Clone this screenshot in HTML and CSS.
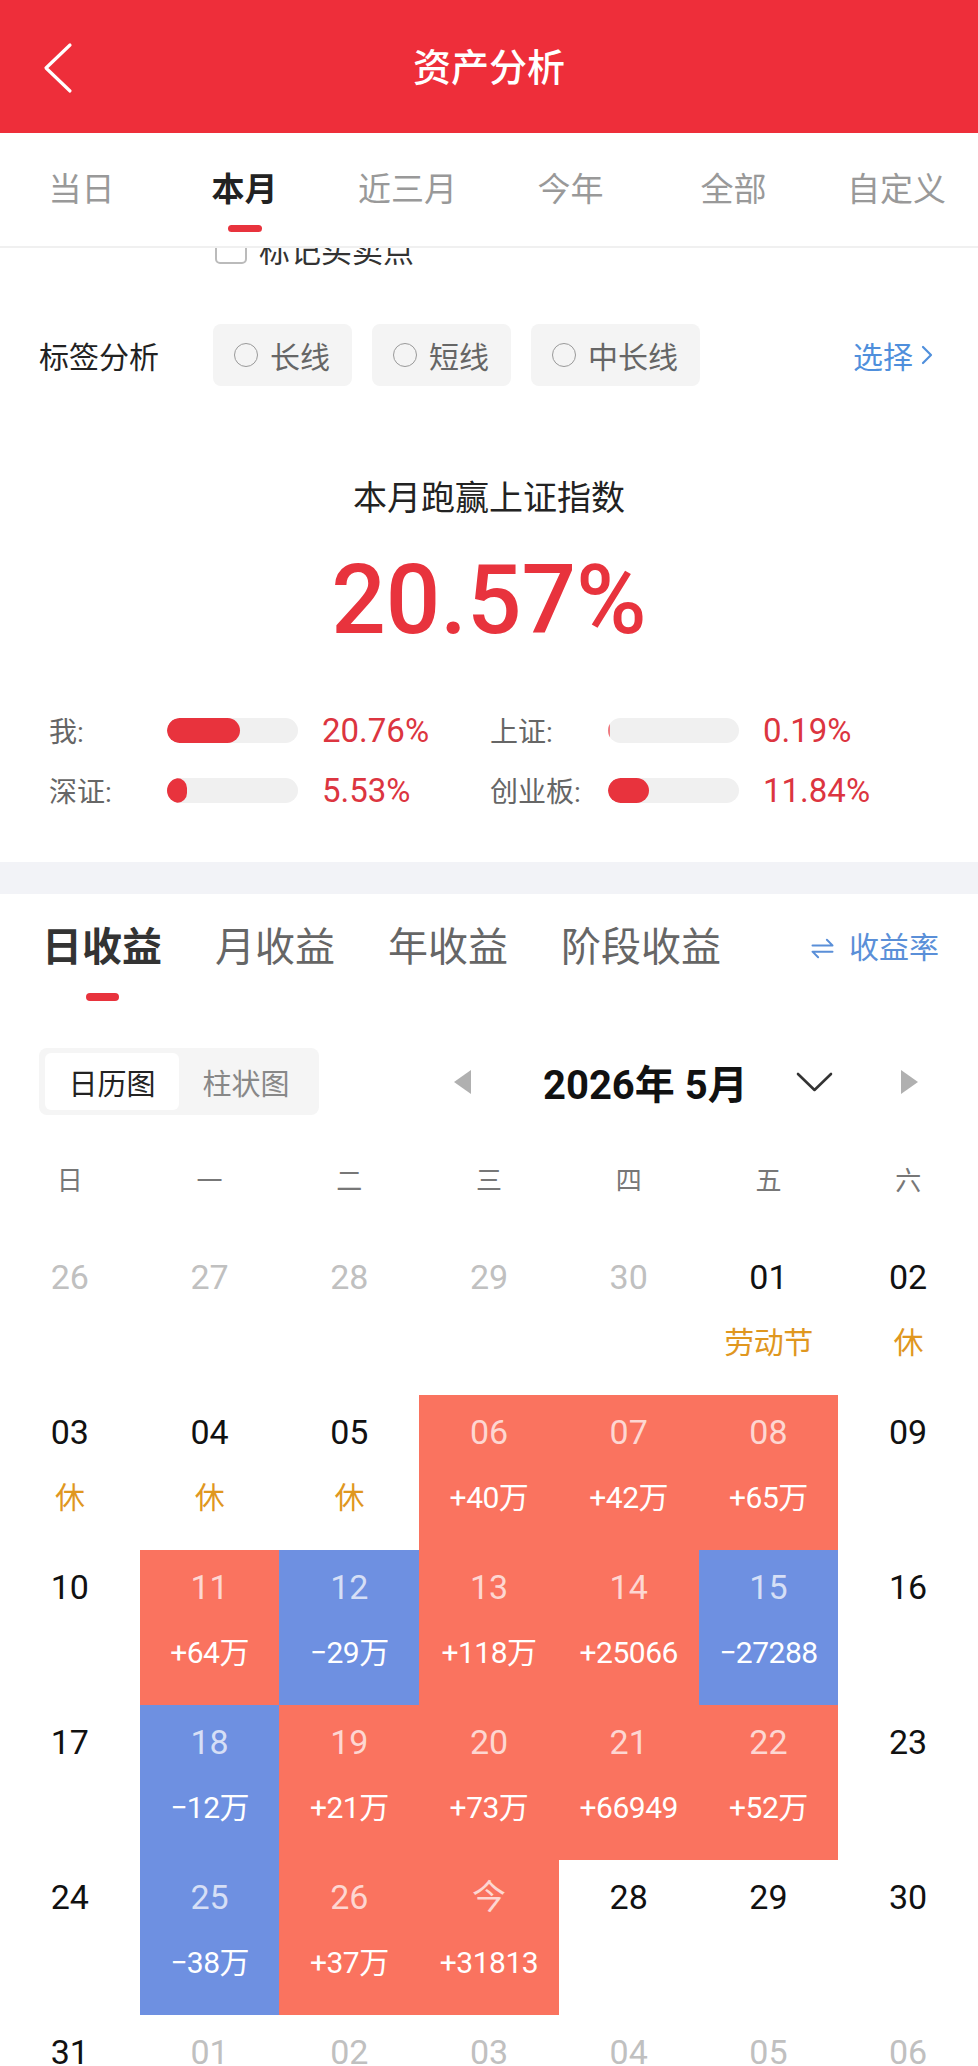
FILE: index.html
```html
<!DOCTYPE html>
<html lang="zh-CN">
    <head>
        <title>资产分析</title>
        <meta charset="utf-8" />
        <meta name="viewport" content="width=device-width, initial-scale=1.0" />
        <link rel="stylesheet" href="styles.css">
    </head>
    <body>
        <div class="topbar">
            <a class="back" href="#">
                <svg width="30" height="52" viewBox="0 0 30 52"><polyline points="27,3 3,26 27,49" fill="none" stroke="#fff" stroke-width="3.2" stroke-linecap="round" stroke-linejoin="round" /></svg>
            </a>
            <h1>资产分析</h1>
            <span></span>
        </div>
        <div class="periods">
            <a href="#">当日</a>
            <a class="on" href="#">本月</a>
            <a href="#">近三月</a>
            <a href="#">今年</a>
            <a href="#">全部</a>
            <a href="#">自定义</a>
        </div>
        <div class="marks-clip">
            <label class="marks"><span class="box"></span>标记买卖点</label>
        </div>
        <div class="tags">
            <span class="tags-title">标签分析</span>
            <span class="chip"><i class="radio"></i>长线</span>
            <span class="chip"><i class="radio"></i>短线</span>
            <span class="chip"><i class="radio"></i>中长线</span>
            <a class="pick" href="#">选择<svg width="12" height="20" viewBox="0 0 12 20"><polyline points="2,2 10,10 2,18" fill="none" stroke="#4f8fdc" stroke-width="2.2" stroke-linecap="round" stroke-linejoin="round" /></svg></a>
        </div>
        <div class="beat">
            <p class="beat-title">本月跑赢上证指数</p>
            <p class="beat-num">20.57%</p>
            <div class="compare">
                <div class="item">
                    <span class="name">我:</span>
                    <span class="bar"><i style="width: 73px"></i></span>
                    <span class="val">20.76%</span>
                </div>
                <div class="item">
                    <span class="name">上证:</span>
                    <span class="bar"><i class="thin" style="width: 2px"></i></span>
                    <span class="val">0.19%</span>
                </div>
                <div class="item">
                    <span class="name">深证:</span>
                    <span class="bar"><i style="width: 20px"></i></span>
                    <span class="val">5.53%</span>
                </div>
                <div class="item">
                    <span class="name">创业板:</span>
                    <span class="bar"><i style="width: 41px"></i></span>
                    <span class="val">11.84%</span>
                </div>
            </div>
        </div>
        <div class="band"></div>
        <div class="profit-tabs">
            <a class="on" href="#">日收益</a>
            <a href="#">月收益</a>
            <a href="#">年收益</a>
            <a href="#">阶段收益</a>
            <a class="rate" href="#"><svg width="25" height="25" viewBox="0 0 20 20"><path d="M2 7.5H18L13.5 3M18 12.5H2L6.5 17" fill="none" stroke="#5a8fd8" stroke-width="1.6" stroke-linecap="round" stroke-linejoin="round" /></svg>收益率</a>
        </div>
        <div class="cal-bar">
            <div class="toggle">
                <span class="on">日历图</span>
                <span>柱状图</span>
            </div>
            <div class="month-nav">
                <svg class="tri" width="17" height="24" viewBox="0 0 17 24"><polygon points="17,0 17,24 0,12" fill="#b0b0b0" /></svg>
                <span class="month">2026年 5月</span>
                <svg class="drop" width="37" height="20" viewBox="0 0 37 20"><polyline points="2,2 18.5,18 35,2" fill="none" stroke="#333" stroke-width="2.6" stroke-linecap="round" stroke-linejoin="round" /></svg>
                <svg class="tri next" width="17" height="24" viewBox="0 0 17 24"><polygon points="0,0 0,24 17,12" fill="#b0b0b0" /></svg>
            </div>
        </div>
        <div class="week">
            <span>日</span><span>一</span><span>二</span><span>三</span><span>四</span><span>五</span><span>六</span>
        </div>
        <div class="days">
            <div class="day other"><b>26</b></div>
            <div class="day other"><b>27</b></div>
            <div class="day other"><b>28</b></div>
            <div class="day other"><b>29</b></div>
            <div class="day other"><b>30</b></div>
            <div class="day"><b>01</b><em class="rest">劳动节</em></div>
            <div class="day"><b>02</b><em class="rest">休</em></div>

            <div class="day"><b>03</b><em class="rest">休</em></div>
            <div class="day"><b>04</b><em class="rest">休</em></div>
            <div class="day"><b>05</b><em class="rest">休</em></div>
            <div class="day up"><b>06</b><em>+40万</em></div>
            <div class="day up"><b>07</b><em>+42万</em></div>
            <div class="day up"><b>08</b><em>+65万</em></div>
            <div class="day"><b>09</b></div>

            <div class="day"><b>10</b></div>
            <div class="day up"><b>11</b><em>+64万</em></div>
            <div class="day down"><b>12</b><em>−29万</em></div>
            <div class="day up"><b>13</b><em>+118万</em></div>
            <div class="day up"><b>14</b><em>+25066</em></div>
            <div class="day down"><b>15</b><em>−27288</em></div>
            <div class="day"><b>16</b></div>

            <div class="day"><b>17</b></div>
            <div class="day down"><b>18</b><em>−12万</em></div>
            <div class="day up"><b>19</b><em>+21万</em></div>
            <div class="day up"><b>20</b><em>+73万</em></div>
            <div class="day up"><b>21</b><em>+66949</em></div>
            <div class="day up"><b>22</b><em>+52万</em></div>
            <div class="day"><b>23</b></div>

            <div class="day"><b>24</b></div>
            <div class="day down"><b>25</b><em>−38万</em></div>
            <div class="day up"><b>26</b><em>+37万</em></div>
            <div class="day up"><b>今</b><em>+31813</em></div>
            <div class="day"><b>28</b></div>
            <div class="day"><b>29</b></div>
            <div class="day"><b>30</b></div>

            <div class="day"><b>31</b></div>
            <div class="day other"><b>01</b></div>
            <div class="day other"><b>02</b></div>
            <div class="day other"><b>03</b></div>
            <div class="day other"><b>04</b></div>
            <div class="day other"><b>05</b></div>
            <div class="day other"><b>06</b></div>
        </div>
    </body>
</html>
```

FILE: styles.css
```css
html, body {
    margin: 0px;
    padding: 0px;
    background: white;
    font-family: Roboto, "Noto Sans CJK SC", sans-serif;
    color: #222;
}
a {
    text-decoration: none;
}
p {
    margin: 0px;
}
.topbar {
    display: grid;
    grid-template-columns: 1fr auto 1fr;
    align-items: center;
    height: 133px;
    padding-top: 2px;
    box-sizing: border-box;
    background: #ee2e3a;
}
.back {
    display: flex;
    padding-left: 43px;
}
.topbar h1 {
    margin: 0px;
    color: white;
    font-size: 38px;
    font-weight: 500;
    line-height: 50px;
}
.periods {
    display: grid;
    grid-template-columns: repeat(6, minmax(0, 1fr));
    height: 115px;
    box-sizing: border-box;
    border-bottom: 2px solid #f0f0f0;
}
.periods a {
    display: flex;
    flex-direction: column;
    align-items: center;
    padding-top: 37px;
    color: #999;
    font-size: 33px;
    line-height: 40px;
}
.periods a.on {
    color: #222;
    font-weight: bold;
}
.periods a.on::after {
    content: "";
    margin-top: 15px;
    width: 34px;
    height: 7px;
    border-radius: 4px;
    background: #e8333d;
}
.marks-clip {
    height: 20px;
    overflow: hidden;
}
.marks {
    display: flex;
    align-items: center;
    margin-top: -16px;
    padding-left: 215px;
    height: 32px;
    font-size: 31px;
    color: #333;
}
.marks .box {
    flex: none;
    width: 28px;
    height: 28px;
    margin-right: 12px;
    border: 2px solid #bbb;
    border-radius: 5px;
}
.tags {
    display: flex;
    align-items: center;
    padding: 56px 45px 0px 39px;
}
.tags-title {
    margin-right: 54px;
    font-size: 30px;
    color: #222;
}
.chip {
    display: flex;
    align-items: center;
    height: 62px;
    margin-right: 20px;
    padding: 0px 22px 0px 21px;
    border-radius: 8px;
    background: #f4f4f4;
    color: #666;
    font-size: 30px;
}
.radio {
    flex: none;
    width: 22px;
    height: 22px;
    margin-right: 12px;
    border: 1.5px solid #999;
    border-radius: 50%;
}
.pick {
    display: flex;
    align-items: center;
    margin-left: auto;
    color: #4f8fdc;
    font-size: 30px;
}
.pick svg {
    margin-left: 8px;
}
.beat {
    padding-top: 90px;
    padding-bottom: 52px;
    text-align: center;
}
.beat-title {
    font-size: 34px;
    line-height: 44px;
    color: #222;
}
.beat-num {
    margin-top: 25px;
    font-size: 96px;
    font-weight: 500;
    line-height: 110px;
    color: #e8333d;
}
.compare {
    display: grid;
    grid-template-columns: 441px 1fr;
    row-gap: 20px;
    margin-top: 55px;
    padding-left: 49px;
    text-align: left;
}
.item {
    display: flex;
    align-items: center;
    height: 40px;
}
.name {
    width: 118px;
    color: #666;
    font-size: 28px;
}
.bar {
    display: flex;
    width: 131px;
    height: 25px;
    border-radius: 13px;
    background: #f0f0f0;
    overflow: hidden;
}
.bar i {
    border-radius: 13px;
    background: #e8333d;
}
.bar i.thin {
    border-radius: 0px;
    background: #f07a80;
}
.val {
    margin-left: 24px;
    color: #dc3540;
    font-size: 33px;
}
.band {
    height: 32px;
    background: #f2f3f7;
}
.profit-tabs {
    display: flex;
    align-items: flex-start;
    padding: 29px 39px 0px 42px;
}
.profit-tabs a {
    display: flex;
    flex-direction: column;
    align-items: center;
    margin-right: 53px;
    color: #666;
    font-size: 40px;
    line-height: 50px;
}
.profit-tabs a.on {
    color: #333;
    font-weight: bold;
}
.profit-tabs a.on::after {
    content: "";
    margin-top: 20px;
    width: 33px;
    height: 8px;
    border-radius: 4px;
    background: #e8333d;
}
.profit-tabs a.rate {
    flex-direction: row;
    margin-left: auto;
    margin-right: 0px;
    color: #5a8fd8;
    font-size: 30px;
}
.rate svg {
    margin-right: 14px;
}
.cal-bar {
    display: flex;
    align-items: center;
    margin-top: 47px;
    padding-left: 39px;
}
.toggle {
    display: flex;
    height: 67px;
    padding: 5px 6px;
    box-sizing: border-box;
    border-radius: 8px;
    background: #f5f5f5;
}
.toggle span {
    display: flex;
    align-items: center;
    justify-content: center;
    width: 134px;
    border-radius: 6px;
    color: #888;
    font-size: 29px;
}
.toggle span.on {
    background: white;
    color: #222;
}
.month-nav {
    display: flex;
    align-items: center;
    margin-left: 135px;
}
.month {
    margin-left: 72px;
    font-size: 40px;
    font-weight: bold;
    color: #111;
}
.drop {
    margin-left: 48px;
}
.next {
    margin-left: 68px;
}
.week {
    display: grid;
    grid-template-columns: repeat(7, minmax(0, 1fr));
    margin: 33px 0px 32px;
    height: 60px;
    align-items: center;
    text-align: center;
    color: #777;
    font-size: 26px;
}
.days {
    display: grid;
    grid-template-columns: repeat(7, minmax(0, 1fr));
    grid-auto-rows: 155px;
}
.day {
    display: flex;
    flex-direction: column;
    align-items: center;
    padding-top: 16px;
    box-sizing: border-box;
    min-width: 0px;
}
.day b {
    font-size: 34px;
    font-weight: normal;
    line-height: 42px;
    color: #111;
}
.day em {
    margin-top: 24px;
    font-style: normal;
    font-size: 30px;
    line-height: 42px;
    letter-spacing: -0.5px;
    white-space: nowrap;
    color: white;
}
.day em.rest {
    color: #e0971f;
}
.day.other b {
    color: #c0c0c0;
}
.day.up {
    background: #fa735f;
}
.day.down {
    background: #6e90e1;
}
.day.up b,
.day.down b {
    color: rgba(255, 255, 255, 0.72);
}
```
